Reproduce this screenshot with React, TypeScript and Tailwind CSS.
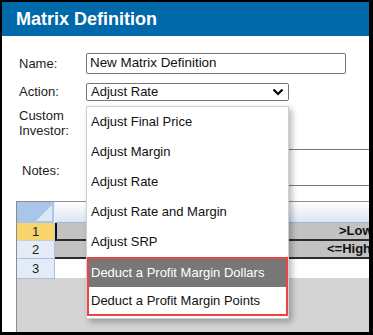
import React from "react";

const items = [
  "Adjust Final Price",
  "Adjust Margin",
  "Adjust Rate",
  "Adjust Rate and Margin",
  "Adjust SRP",
];

export default function App() {
  return (
    <div className="w-[373px] h-[335px] bg-black pt-[2px] pl-[2px] pr-[4px] pb-[3px] font-['Liberation_Sans',Arial,sans-serif]">
      <div className="relative w-full h-full bg-white flex flex-col overflow-hidden text-[#1c1c1c]">
        <div className="h-[34px] shrink-0 bg-[#0069a9] flex items-center pl-[14px] text-white font-bold text-[18px] leading-none">
          Matrix Definition
        </div>

        <div className="flex flex-col pl-[17px] shrink-0">
          <div className="flex items-center mt-[17px] h-[21px]">
            <div className="w-[67px] shrink-0 text-[13px]">Name:</div>
            <div className="w-[260px] shrink-0 h-[21px] border border-[#767676] rounded-[2px] flex items-center pl-[3px] text-[13.4px] text-[#111]">
              New Matrix Definition
            </div>
          </div>
          <div className="flex items-center mt-[9px] h-[18px]">
            <div className="w-[67px] shrink-0 text-[13px]">Action:</div>
            <div className="w-[203px] shrink-0 h-[18px] border border-[#767676] rounded-[2px] flex items-center justify-between pl-[4px] pr-[4px] text-[13px] text-[#111]">
              <span>Adjust Rate</span>
              <svg width="12" height="8" viewBox="0 0 12 8">
                <polyline points="1.5,1.5 6,6 10.5,1.5" fill="none" stroke="#000" strokeWidth="2.2" />
              </svg>
            </div>
          </div>
          <div className="mt-[7px] text-[13px] leading-[15px]">
            <div>Custom</div>
            <div>Investor:</div>
          </div>
          <div className="flex items-start mt-[11px]">
            <div className="w-[67px] shrink-0 pl-[3px] mt-[14px] text-[13px] leading-[15px]">Notes:</div>
            <div className="w-[300px] h-[37px] shrink-0 border border-[#777]"></div>
          </div>
        </div>

        <div className="ml-[14px] mt-[15px] flex-1 bg-[#d4d4d4] border-l border-[#8c8c8c] flex flex-col overflow-hidden">
          <div className="flex h-[22px] shrink-0 border-t border-[#8f8f8f]">
            <div className="relative w-[38px] h-full bg-[#a9c5ea] border-r border-[#e6eef8] overflow-hidden">
              <svg className="absolute right-[2px] bottom-[2px]" width="16" height="16" viewBox="0 0 16 16">
                <polygon points="16,0 16,16 0,16" fill="#dde8f6" />
              </svg>
            </div>
            <div className="flex-1 bg-gradient-to-b from-white to-[#dbe5f3] border-b border-[#a3b7d3]"></div>
          </div>
          <div className="flex h-[18px] shrink-0">
            <div className="w-[38px] bg-[#f8d46c] border-b border-r border-[#c9cfda] flex items-center justify-center text-[13px]">1</div>
            <div className="flex-1 bg-[#c2c2c2] border-l-2 border-l-[#111] border-b-2 border-b-[#2b2b2b] pl-[282px] flex items-center text-[13px] font-bold text-[#111] whitespace-nowrap overflow-hidden">
              &gt;Low
            </div>
          </div>
          <div className="flex h-[18px] shrink-0">
            <div className="w-[38px] bg-[#e3ebf7] border-b border-r border-[#a9bfdc] flex items-center justify-center text-[13px]">2</div>
            <div className="flex-1 bg-[#c2c2c2] border-b-2 border-b-[#2b2b2b] pl-[272px] flex items-center text-[13px] font-bold text-[#111] whitespace-nowrap overflow-hidden">
              &lt;=High
            </div>
          </div>
          <div className="flex h-[20px] shrink-0">
            <div className="w-[38px] bg-[#e3ebf7] border-b border-r border-[#a9bfdc] flex items-center justify-center text-[13px]">3</div>
            <div className="flex-1 bg-white border-b border-[#d0d0d0]"></div>
          </div>
        </div>

        <div className="absolute left-[84px] top-[104px] w-[203px] bg-white border border-[#cfcfcf] shadow-[3px_3px_6px_rgba(0,0,0,0.28)] text-[13px] text-[#111]">
          {items.map((t) => (
            <div key={t} className="h-[30px] flex items-center pl-[4px]">
              {t}
            </div>
          ))}
          <div className="border-2 border-[#ec4349] mb-[2px]">
            <div className="h-[28px] bg-[#777777] text-white flex items-center pl-[2px]">
              Deduct a Profit Margin Dollars
            </div>
            <div className="h-[27px] flex items-center pl-[2px]">
              Deduct a Profit Margin Points
            </div>
          </div>
        </div>
      </div>
    </div>
  );
}
